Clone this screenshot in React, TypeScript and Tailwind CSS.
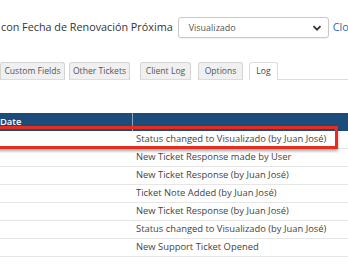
import React from 'react';

const tabs = [
  { label: 'Custom Fields', w: 'w-[65px]', ml: 'ml-0' },
  { label: 'Other Tickets', w: 'w-[61px]', ml: 'ml-[4px]' },
  { label: 'Client Log', w: 'w-[51px]', ml: 'ml-[10px]' },
  { label: 'Options', w: 'w-[45px]', ml: 'ml-[7px]' },
];

const rows = [
  'Status changed to Visualizado (by Juan José)',
  'New Ticket Response made by User',
  'New Ticket Response (by Juan José)',
  'Ticket Note Added (by Juan José)',
  'New Ticket Response (by Juan José)',
  'Status changed to Visualizado (by Juan José)',
  'New Support Ticket Opened',
];

const App: React.FC = () => {
  return (
    <div className="w-[348px] h-[268px] overflow-hidden bg-white font-['Open_Sans',sans-serif] relative">
      {/* status line */}
      <div className="flex items-center h-[21px] mt-[17px] pl-[1px] whitespace-nowrap">
        <span className="text-[10.8px] text-[#333] leading-none">con Fecha de Renovación Próxima</span>
        <div className="ml-[5px] w-[151px] h-[21px] shrink-0 border border-[#c8c8c8] rounded-[3px] flex items-center justify-between pl-[10px] pr-[6px] shadow-[0_1px_1px_rgba(0,0,0,0.06)]">
          <span className="text-[9px] text-[#555]">Visualizado</span>
          <svg width="10" height="10" viewBox="0 0 10 10" className="text-[#333]">
            <path d="M1.5 3.2 L5 6.7 L8.5 3.2" fill="none" stroke="currentColor" strokeWidth="1.8" />
          </svg>
        </div>
        <span className="ml-[4px] text-[10.8px] text-[#2a6cb5] leading-none">Clo</span>
      </div>

      {/* tabs */}
      <div className="flex items-end mt-[24px] h-[18px] whitespace-nowrap">
        {tabs.map(t => (
          <div
            key={t.label}
            className={`${t.w} ${t.ml} h-[18px] shrink-0 bg-[#f0f0f0] border border-[#d4d4d4] border-b-[#dcdcdc] rounded-t-[3px] flex items-center justify-center text-[8.6px] text-[#555]`}
          >
            {t.label}
          </div>
        ))}
        <div className="w-[29px] ml-[6px] h-[18px] shrink-0 bg-white border border-[#dcdcdc] border-b-0 rounded-t-[3px] flex items-center justify-center text-[8.6px] text-[#444]">
          Log
        </div>
        <div className="flex-1 h-[18px] border-b border-[#dcdcdc]" />
      </div>

      {/* table */}
      <div className="mt-[33px]">
        <div className="flex h-[18px] bg-[#1d4b7a] text-white text-[9.4px] font-semibold">
          <div className="w-[133px] border-r border-[#8aa3bf] flex items-center">Date</div>
          <div className="flex-1" />
        </div>
        {rows.map((r, i) => (
          <div key={i} className="flex h-[18px] border-b border-[#e6e6e6] text-[9.4px] text-[#444]">
            <div className="w-[133px]" />
            <div className="flex-1 flex items-center pl-[3px] whitespace-nowrap">{r}</div>
          </div>
        ))}
      </div>

      {/* highlight annotation */}
      <div className="absolute left-[-6px] top-[126px] w-[344px] h-[23px] border-[3px] border-[#e52d20] shadow-[0_2px_3px_rgba(0,0,0,0.35)]" />
    </div>
  );
};

export default App;
